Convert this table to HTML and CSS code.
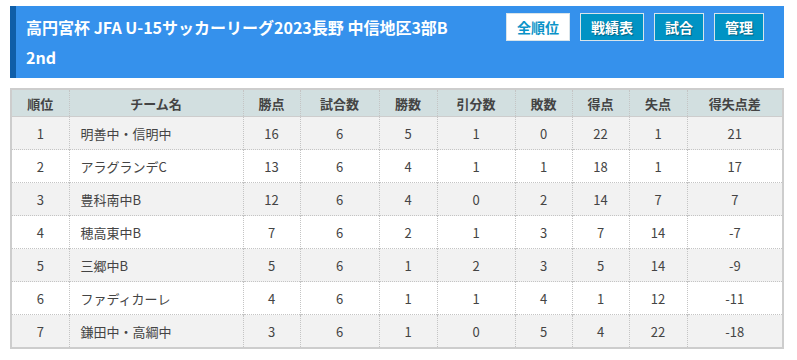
FILE: index.html
```html
<!DOCTYPE html>
<html lang="ja">
<head>
<meta charset="utf-8">
<link rel="stylesheet" href="styles.css">
</head>
<body>
<div class="page">
  <div class="head">
    <h1 class="title">高円宮杯 JFA U-15サッカーリーグ2023長野 中信地区3部B<br>2nd</h1>
    <div class="btns">
      <a class="btn active">全順位</a>
      <a class="btn">戦績表</a>
      <a class="btn">試合</a>
      <a class="btn">管理</a>
    </div>
  </div>
  <table class="rank">
    <colgroup>
      <col style="width:58px"><col style="width:174px"><col style="width:57px"><col style="width:79px"><col style="width:58px"><col style="width:78px"><col style="width:57px"><col style="width:57px"><col style="width:58px"><col>
    </colgroup>
    <thead>
      <tr><th>順位</th><th>チーム名</th><th>勝点</th><th>試合数</th><th>勝数</th><th>引分数</th><th>敗数</th><th>得点</th><th>失点</th><th>得失点差</th></tr>
    </thead>
    <tbody>
      <tr><td>1</td><td class="name">明善中・信明中</td><td>16</td><td>6</td><td>5</td><td>1</td><td>0</td><td>22</td><td>1</td><td>21</td></tr>
      <tr><td>2</td><td class="name">アラグランデC</td><td>13</td><td>6</td><td>4</td><td>1</td><td>1</td><td>18</td><td>1</td><td>17</td></tr>
      <tr><td>3</td><td class="name">豊科南中B</td><td>12</td><td>6</td><td>4</td><td>0</td><td>2</td><td>14</td><td>7</td><td>7</td></tr>
      <tr><td>4</td><td class="name">穂高東中B</td><td>7</td><td>6</td><td>2</td><td>1</td><td>3</td><td>7</td><td>14</td><td>-7</td></tr>
      <tr><td>5</td><td class="name">三郷中B</td><td>5</td><td>6</td><td>1</td><td>2</td><td>3</td><td>5</td><td>14</td><td>-9</td></tr>
      <tr><td>6</td><td class="name">ファディカーレ</td><td>4</td><td>6</td><td>1</td><td>1</td><td>4</td><td>1</td><td>12</td><td>-11</td></tr>
      <tr><td>7</td><td class="name">鎌田中・高綱中</td><td>3</td><td>6</td><td>1</td><td>0</td><td>5</td><td>4</td><td>22</td><td>-18</td></tr>
    </tbody>
  </table>
</div>
</body>
</html>
```
FILE: styles.css
```css
html, body {
  margin: 0;
  padding: 0;
  background: #fff;
}
body {
  font-family: "Noto Sans CJK JP", "Noto Sans", sans-serif;
  color: #444;
}
.page {
  padding: 6px 13px 0 10px;
}
.head {
  display: flex;
  justify-content: space-between;
  align-items: flex-start;
  background: #3591ec;
  border-left: 6px solid #0f5ea8;
  height: 72px;
  box-sizing: border-box;
  padding: 6px 20px 0 10px;
}
.title {
  margin: 0;
  color: #fff;
  font-size: 16px;
  font-weight: bold;
  line-height: 30px;
}
.btns {
  display: flex;
  gap: 10px;
  padding-top: 1px;
}
.btn {
  display: block;
  box-sizing: border-box;
  height: 28px;
  line-height: 26px;
  padding: 0 10px;
  border: 1px solid #d8e4ea;
  background: #0093c4;
  color: #fff;
  font-size: 14px;
  font-weight: bold;
  text-shadow: 1px 1px 1px rgba(0,0,0,0.35);
}
.btn.active {
  background: #fff;
  color: #0b93c8;
  text-shadow: none;
}
.rank {
  margin-top: 10px;
  width: 774px;
  border-collapse: collapse;
  table-layout: fixed;
  border: 2px solid #cdcdcd;
  font-size: 13px;
}
.rank th {
  height: 26px;
  background: #d2dfe0;
  font-weight: bold;
  color: #444;
  text-align: center;
  padding: 0;
  border-left: 1px dotted #c4c4c4;
  border-bottom: 1px solid #cdcdcd;
}
.rank td {
  height: 32px;
  text-align: center;
  padding: 0;
  border-left: 1px dotted #c4c4c4;
  border-top: 1px dotted #c4c4c4;
  color: #444;
}
.rank tbody tr:nth-child(odd) td {
  background: #f2f2f2;
}
.rank td.name {
  text-align: left;
  padding-left: 11px;
}
```
